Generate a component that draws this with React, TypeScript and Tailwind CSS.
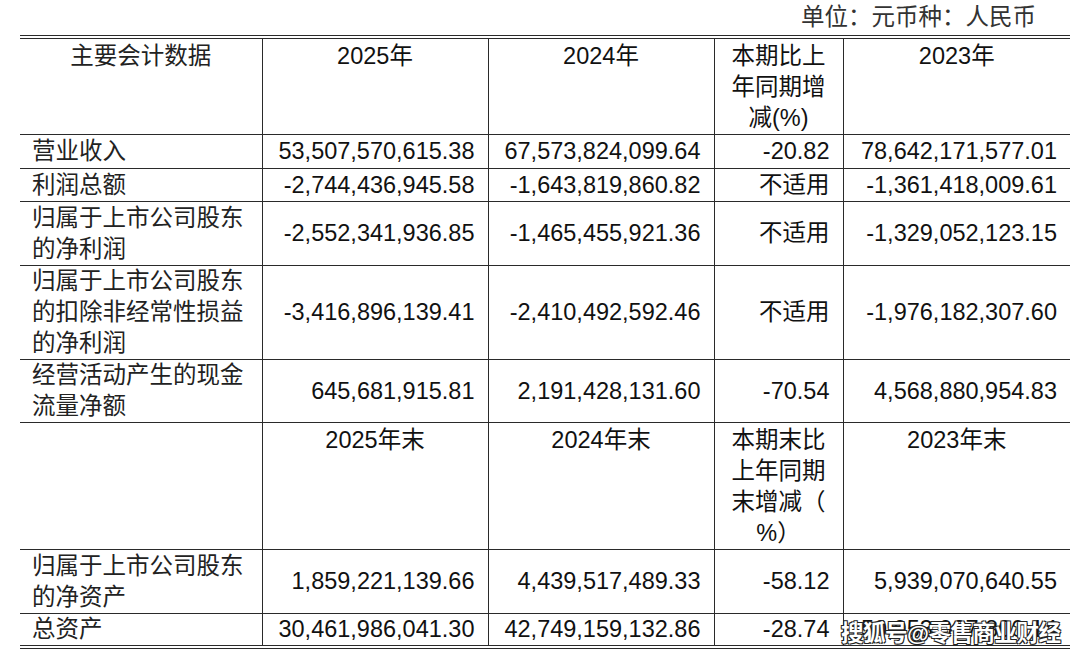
const num = "font-['Liberation_Sans','Noto_Sans_CJK_SC',sans-serif]";

type Row = { label: string[]; v: string[]; h: string };

const topRows: Row[] = [
  { label: ["营业收入"], v: ["53,507,570,615.38", "67,573,824,099.64", "-20.82", "78,642,171,577.01"], h: "h-[34px]" },
  { label: ["利润总额"], v: ["-2,744,436,945.58", "-1,643,819,860.82", "不适用", "-1,361,418,009.61"], h: "h-[33px]" },
  { label: ["归属于上市公司股东", "的净利润"], v: ["-2,552,341,936.85", "-1,465,455,921.36", "不适用", "-1,329,052,123.15"], h: "h-[64px]" },
  {
    label: ["归属于上市公司股东", "的扣除非经常性损益", "的净利润"],
    v: ["-3,416,896,139.41", "-2,410,492,592.46", "不适用", "-1,976,182,307.60"],
    h: "h-[92px]",
  },
  { label: ["经营活动产生的现金", "流量净额"], v: ["645,681,915.81", "2,191,428,131.60", "-70.54", "4,568,880,954.83"], h: "h-[63px]" },
];

const bottomRows: Row[] = [
  { label: ["归属于上市公司股东", "的净资产"], v: ["1,859,221,139.66", "4,439,517,489.33", "-58.12", "5,939,070,640.55"], h: "h-[64px]" },
  { label: ["总资产"], v: ["30,461,986,041.30", "42,749,159,132.86", "-28.74", "50,953,927,800.14"], h: "h-[30px]" },
];

const line = "border border-[#2a2a2a]";

function Lines({ items }: { items: string[] }) {
  return (
    <>
      {items.map((t, i) => (
        <div key={i}>{t}</div>
      ))}
    </>
  );
}

function DataRow({ row }: { row: Row }) {
  return (
    <tr className={row.h}>
      <td className={`${line} border-l-[#b5b5b5] border-l-dashed pl-3 align-middle text-[#222]`}>
        <Lines items={row.label} />
      </td>
      {row.v.map((v, i) => (
        <td key={i} className={`${line} ${i === 3 ? "border-r-[#b5b5b5]" : ""} pr-[13px] text-right align-middle text-[#111]`}>
          {v}
        </td>
      ))}
    </tr>
  );
}

function HeadRow({ cells, h, first }: { cells: string[][]; h: string; first?: string }) {
  return (
    <tr className={h}>
      <td className={`${line} border-l-[#b5b5b5] border-l-dashed pt-[2px] text-center align-top text-[#222]`}>{first}</td>
      {cells.map((c, i) => (
        <td key={i} className={`${line} ${i === 3 ? "border-r-[#b5b5b5]" : ""} pt-[2px] text-center align-top text-[#111]`}>
          <Lines items={c} />
        </td>
      ))}
    </tr>
  );
}

export default function App() {
  return (
    <div className={`relative h-[659px] w-[1080px] overflow-hidden bg-white ${num} text-[23.5px] leading-[31px]`}>
      <div className="flex h-[35px] items-center justify-end pr-[44px] text-[#333]">单位：元币种：人民币</div>

      <div className="ml-[20px] w-[1050px] border-y-4 border-double border-[#2a2a2a]">
        <table className="w-full table-fixed border-collapse border-hidden">
          <colgroup>
            <col className="w-[242px]" />
            <col className="w-[226px]" />
            <col className="w-[226px]" />
            <col className="w-[129px]" />
            <col className="w-[227px]" />
          </colgroup>
          <tbody>
            <HeadRow
              h="h-[92px]"
              first="主要会计数据"
              cells={[["2025年"], ["2024年"], ["本期比上", "年同期增", "减(%)"], ["2023年"]]}
            />
            {topRows.map((r, i) => (
              <DataRow key={i} row={r} />
            ))}
            <HeadRow
              h="h-[126px]"
              cells={[["2025年末"], ["2024年末"], ["本期末比", "上年同期", "末增减（", "%）"], ["2023年末"]]}
            />
            {bottomRows.map((r, i) => (
              <DataRow key={i} row={r} />
            ))}
          </tbody>
        </table>
      </div>

      <div className="absolute left-[841px] top-[620px] text-[22.5px] font-bold leading-[28px] tracking-[-0.5px] text-white [text-shadow:1px_1px_0_#222,-1px_-1px_0_#222,1px_-1px_0_#222,-1px_1px_0_#222]">
        搜狐号@零售商业财经
      </div>
    </div>
  );
}
